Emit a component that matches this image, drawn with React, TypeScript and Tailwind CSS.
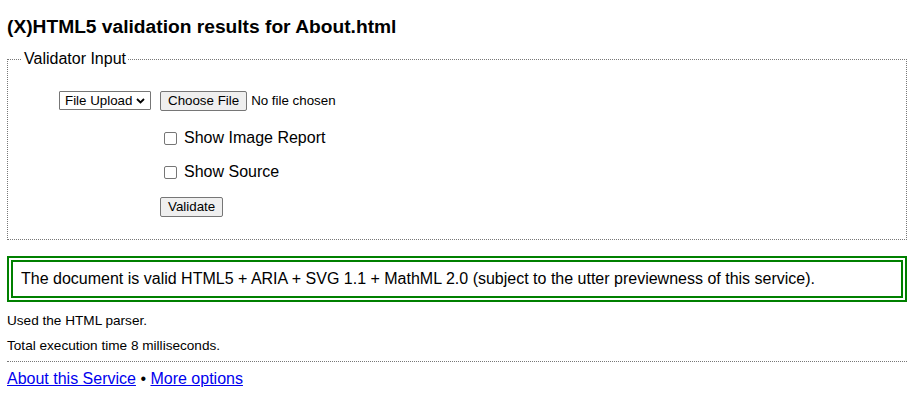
export default function App() {
  return (
    <div className="min-h-[413px] bg-white pl-[7px] text-black font-['Liberation_Sans',Arial,sans-serif]">
      <div className="w-[900px]">
        <h2 className="pt-[16px] text-[19.2px] leading-[22px] font-bold">
          (X)HTML5 validation results for About.html
        </h2>
        <fieldset className="mt-[12px] border border-dotted border-[#777] px-[14px] pt-[23px] pb-[22px]">
          <legend className="px-[2px] text-[16px] leading-[18px]">Validator Input</legend>
          <div className="flex items-start">
            <div className="flex w-[138px] justify-end pr-[9px]">
              <div className="relative h-[19px] w-[92px]">
                <select
                  className="block h-[19px] w-[92px] appearance-none rounded-[1px] border border-[#767676] bg-white py-0 pl-[5px] text-[13.33px] leading-[17px] outline-none"
                  defaultValue="file"
                >
                  <option value="file">File Upload</option>
                </select>
                <svg
                  className="pointer-events-none absolute left-[77px] top-[7px]"
                  width="9"
                  height="6"
                  viewBox="0 0 9 6"
                >
                  <polyline points="1,1 4.5,4.5 8,1" fill="none" stroke="#000" strokeWidth="1.8" />
                </svg>
              </div>
            </div>
            <div className="flex items-center">
              <button className="h-[20px] rounded-[2px] border border-[#767676] bg-[#efefef] px-[7px] text-[13.33px] leading-[16px]">
                Choose File
              </button>
              <span className="ml-[4px] text-[13.33px] leading-[16px]">No file chosen</span>
            </div>
          </div>
          <div className="ml-[138px] mt-[18px] flex h-[18px] items-center">
            <span className="ml-[4px] inline-block h-[13px] w-[13px] rounded-[2px] border border-[#767676] bg-white"></span>
            <span className="ml-[7px] text-[16px] leading-[18px]">Show Image Report</span>
          </div>
          <div className="ml-[138px] mt-[16px] flex h-[18px] items-center">
            <span className="ml-[4px] inline-block h-[13px] w-[13px] rounded-[2px] border border-[#767676] bg-white"></span>
            <span className="ml-[7px] text-[16px] leading-[18px]">Show Source</span>
          </div>
          <div className="ml-[138px] mt-[16px] flex">
            <button className="h-[20px] rounded-[2px] border border-[#767676] bg-[#efefef] px-[7px] text-[13.33px] leading-[16px]">
              Validate
            </button>
          </div>
        </fieldset>
        <div className="mt-[16px] border-[6px] border-double border-[#008000] p-[8px] text-[16px] leading-[18px]">
          The document is valid HTML5 + ARIA + SVG 1.1 + MathML 2.0 (subject to the utter previewness of this service).
        </div>
        <p className="mt-[11px] text-[13.6px] leading-[15px]">Used the HTML parser.</p>
        <p className="mt-[10px] text-[13.6px] leading-[15px]">Total execution time 8 milliseconds.</p>
        <hr className="mt-[8px] border-0 border-t border-dotted border-[#777]" />
        <div className="mt-[8px] text-[16px] leading-[18px]">
          <a href="#" className="text-[#0000ee] underline">About this Service</a>
          {" \u2022 "}
          <a href="#" className="text-[#0000ee] underline">More options</a>
        </div>
      </div>
    </div>
  );
}
